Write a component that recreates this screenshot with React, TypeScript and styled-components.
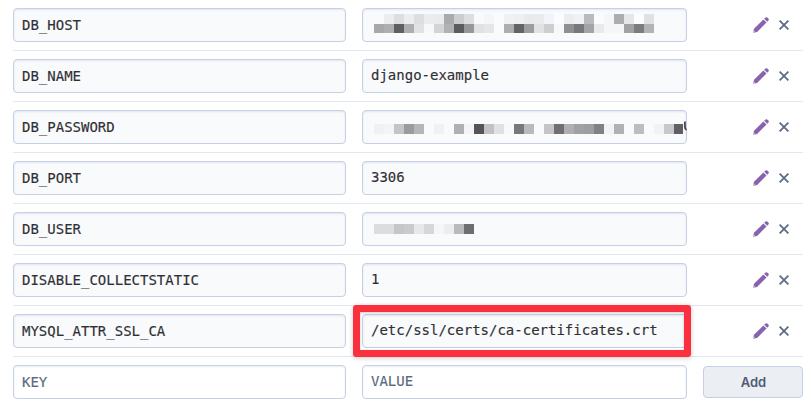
import React from "react";
import styled, { createGlobalStyle } from "styled-components";

const GlobalStyle = createGlobalStyle`
  *, *::before, *::after { box-sizing: border-box; }
  body { margin: 0; background: #fff; overflow: hidden; }
`;

const Table = styled.div`
  width: 811px;
  height: 410px;
  padding: 0 8px 0 13px;
  overflow: hidden;
`;

const Row = styled.div<{ $last?: boolean }>`
  display: grid;
  grid-template-columns: 333px 325px 100px;
  column-gap: 16px;
  align-items: center;
  height: 51px;
  border-bottom: 1px solid ${(p) => (p.$last ? "transparent" : "#e3e7f1")};
`;

const fieldStyle = `
  height: 34px;
  width: 100%;
  border: 1px solid #c5d0e4;
  border-radius: 4px;
  font: 14px/20px "DejaVu Sans Mono", monospace;
  -webkit-text-stroke: 0.15px currentColor;
`;

const Field = styled.div<{ $value?: boolean }>`
  ${fieldStyle}
  position: relative;
  display: flex;
  align-items: flex-start;
  padding: ${(p) => (p.$value ? "5px 8px" : "6px 8px")};
  background: #f9fafc;
  color: #303034;
  box-shadow: inset 0 1px 2px rgba(190, 203, 224, 0.4);
  white-space: pre;
`;

const Input = styled.input<{ $value?: boolean }>`
  ${fieldStyle}
  padding: ${(p) => (p.$value ? "0 8px 2px" : "0 8px")};
  background: #fff;
  outline: 0;
  box-shadow: inset 0 1px 2px rgba(190, 203, 224, 0.35);
  &::placeholder { color: #596981; opacity: 1; }
`;

const Highlight = styled.div`
  position: absolute;
  inset: -10px -4.5px -10px -10px;
  border: 7px solid #fb303e;
  border-radius: 3px;
  box-shadow: 0 1px 5px rgba(0, 0, 0, 0.22), inset 0 1px 3px rgba(0, 0, 0, 0.2);
`;

const Mosaic = styled.div<{ $top: number }>`
  display: flex;
  flex-direction: column;
  margin: ${(p) => p.$top - 5}px 0 0 3px;
`;

const MosaicLine = styled.div<{ $height: number }>`
  display: flex;
  height: ${(p) => p.$height}px;
`;

const Cell = styled.span<{ $color: string; $width: number }>`
  flex: 0 0 ${(p) => p.$width}px;
  background: ${(p) => p.$color};
`;

const Remnant = styled.svg`
  position: absolute;
  left: 320px;
  top: 9px;
`;

const Actions = styled.div`
  display: flex;
  justify-content: flex-end;
  align-items: center;
  padding-right: 14px;
  gap: 10px;
`;

const IconButton = styled.button`
  display: flex;
  padding: 0;
  border: 0;
  background: none;
`;

const AddButton = styled.button`
  width: 100px;
  height: 32px;
  padding: 0 0 1px 1px;
  border: 1px solid #c5d0e4;
  border-radius: 4px;
  background: #ebeef3;
  color: #4d5b73;
  font: 600 13px/20px Inter, sans-serif;
`;

const Pencil = () => (
  <svg width="16" height="16" viewBox="0 0 16 16">
    <path d="M0.2 15.8 1 11.8 10.4 2.5 13.5 5.6 4.1 14.9Z" fill="#8762ad" />
    <path d="M0.2 15.8 0.7 13.3 2.7 15.2Z" fill="#cdbfde" />
    <path d="M11.2 1.8 12.5.6Q13.5-.2 14.6.8L15.3 1.5Q16.3 2.6 15.4 3.6L14.2 4.8Z" fill="#8762ad" />
  </svg>
);

const Cross = () => (
  <svg width="10" height="10" viewBox="0 0 10 10">
    <path d="M.6.6 9.4 9.4M9.4.6.6 9.4" fill="none" stroke="#5c6c85" strokeWidth="1.8" />
  </svg>
);

type Masked = { top: number; lines: { height: number; colors: string; lastWidth?: number }[] };
type Entry = { name: string; value?: string; masked?: Masked; remnant?: boolean; marked?: boolean };

const entries: Entry[] = [
  {
    name: "DB_HOST",
    masked: {
      top: 5,
      lines: [
        {
          height: 10,
          colors:
            "f8fafc ecedee dddee0 ecedef dddee0 ebecee e9ebee a9aaac cccdcf dddee0 f8fafd f5f6f7 f9fbfd f0f1f3 eeeff0 e9eaec e9ebef f2f4f9 fafcff ecedee f0f1f4 b8babe f9fbff f5f6f8 acadaf e5e7e9 fafcff e0e1e3",
        },
        {
          height: 9,
          colors:
            "a8a8a9 aeafb0 5f5f60 adaeaf e2e2e4 f7f8fa d3d4d5 b0b1b2 5c5c5d 969798 e0e1e2 e5e6e8 fafbfe adaeaf 636364 9c9d9e e1e2e3 cdcecf f6f7f9 8f9091 777879 a4a4a6 e8e9eb f5f6f8 f5f6f8 a1a2a4 7b7c7e b2b3b4",
        },
      ],
    },
  },
  { name: "DB_NAME", value: "django-example" },
  {
    name: "DB_PASSWORD",
    remnant: true,
    masked: {
      top: 13,
      lines: [
        {
          height: 10,
          lastWidth: 9,
          colors:
            "f0f1f3 f3f4f6 c4c5c6 9a9b9f b5b6b7 f9fafc f0f1f3 f9fafc afb0b2 f2f4f9 555556 c1c2c4 e0e1e3 f6f8fa 777879 b9babc f9fafc c4c5c7 6f6f71 aeafb1 a0a1a3 9d9ea1 808185 f2f3f5 b0b1b3 f9fafc bcbdbf f9fafc f1f2f4 c7c8cb 5f5f64",
        },
      ],
    },
  },
  { name: "DB_PORT", value: "3306" },
  {
    name: "DB_USER",
    masked: {
      top: 11,
      lines: [{ height: 10, colors: "dcddde dcddde c5c6cb c9cacc e7e8ea d6d7d8 f5f6f8 ecedef b9babb 6e6e70" }],
    },
  },
  { name: "DISABLE_COLLECTSTATIC", value: "1" },
  { name: "MYSQL_ATTR_SSL_CA", value: "/etc/ssl/certs/ca-certificates.crt", marked: true },
];

const MaskedValue = ({ top, lines }: Masked) => (
  <Mosaic $top={top}>
    {lines.map((line, i) => (
      <MosaicLine key={i} $height={line.height}>
        {line.colors.split(" ").map((c, j, all) => (
          <Cell key={j} $color={`#${c}`} $width={j === all.length - 1 ? line.lastWidth ?? 10 : 10} />
        ))}
      </MosaicLine>
    ))}
  </Mosaic>
);

export default function App() {
  return (
    <>
      <GlobalStyle />
      <Table>
        {entries.map((e) => (
          <Row key={e.name}>
            <Field>{e.name}</Field>
            <Field $value>
              {e.value}
              {e.masked && <MaskedValue {...e.masked} />}
              {e.remnant && (
                <Remnant width="4" height="12" viewBox="0 0 4 12">
                  <path d="M1.9 1.5V7Q1.9 9.2 3.6 10" fill="none" stroke="#4b4c50" strokeWidth="1.9" />
                </Remnant>
              )}
              {e.marked && <Highlight />}
            </Field>
            <Actions>
              <IconButton aria-label="Edit"><Pencil /></IconButton>
              <IconButton aria-label="Remove"><Cross /></IconButton>
            </Actions>
          </Row>
        ))}
        <Row $last>
          <Input placeholder="KEY" />
          <Input $value placeholder="VALUE" />
          <AddButton>Add</AddButton>
        </Row>
      </Table>
    </>
  );
}
